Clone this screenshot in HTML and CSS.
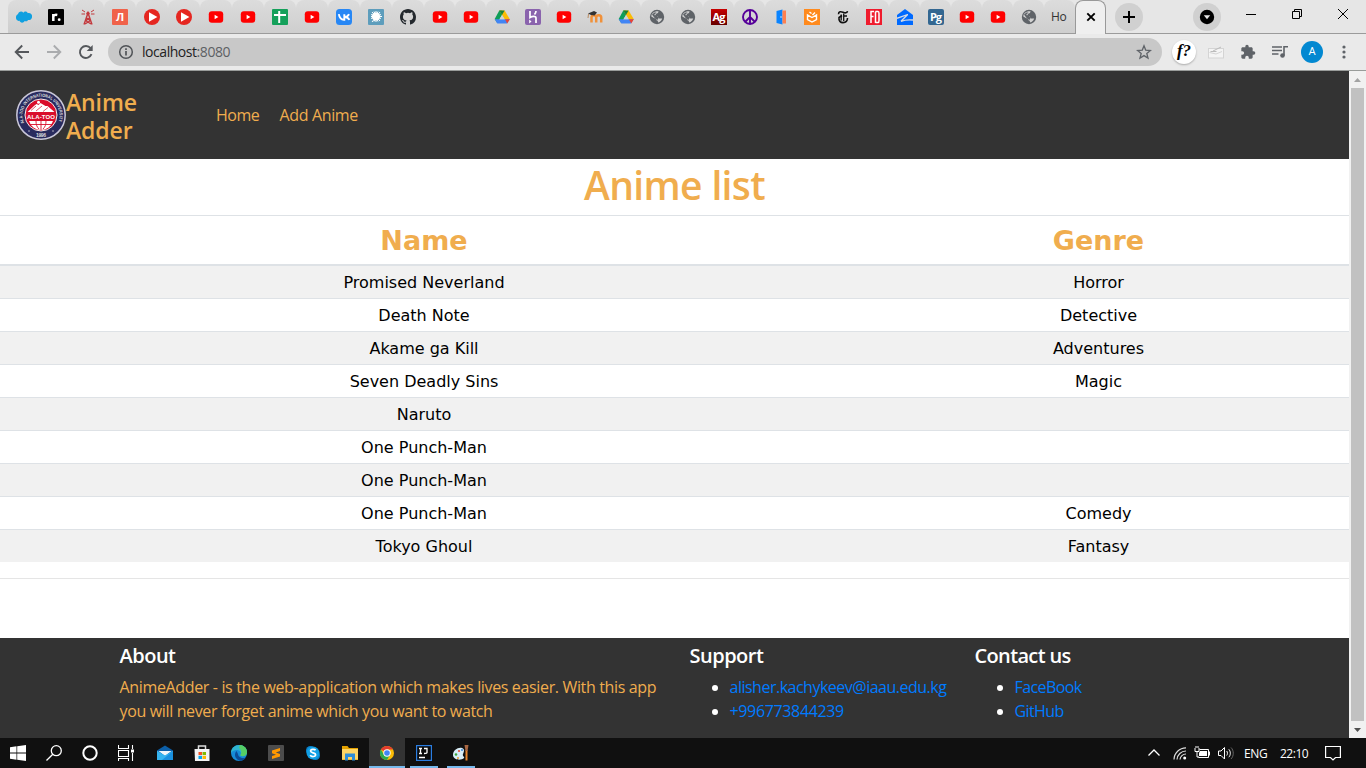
FILE: index.html
```html
<!DOCTYPE html>
<html lang="en">
<head>
<meta charset="utf-8">
<title>Home</title>
<link rel="stylesheet" href="styles.css">
</head>
<body>
<svg class="defs" aria-hidden="true">
  <symbol id="yt" viewBox="0 0 16 16"><rect x=".8" y="2.300" width="14.400" height="11.400" rx="3" fill="#f00"/><path d="M6.600 5.800v4.400L10.400 8z" fill="#fff"/></symbol>
  <symbol id="play" viewBox="0 0 16 16"><circle cx="8" cy="8" r="8" fill="#e52620"/><path d="M5 3.200v9.600L13.400 8z" fill="#fff"/></symbol>
  <symbol id="globe" viewBox="0 0 16 16"><circle cx="8" cy="8" r="7.200" fill="#5f6368"/><path d="M9.500 2.300C9.500 4 8.500 4.500 7 4.700 7 6 6 6.300 5.500 6.500c1.500.7 3 .3 3.500 1.500.3 1 .5 1.500 1.500 1.500h2.700c-.7 2-2 3.500-4 4-.3-1-.2-2-1.700-2.300C7.500 9.500 4.500 9 2.300 7.500 2.500 5 4 2.200 9.500 2.300z" fill="#d2d2d2"/><path d="M3 5.500 5.500 3.500h2L5 6l3 .8 1.500 2L8.500 11 6 9.500z" fill="#5f6368"/></symbol>
  <symbol id="drive" viewBox="0 0 16 16"><path d="M5.300 1.500h2.500L8 6 3.200 14 .7 10z" fill="#0f9d58"/><path d="M5.400 1.500h5.200L16 10.500h-5.200z" fill="#fbbc04"/><path d="M5.400 1.500h5.200L8 6z" fill="#188038"/><path d="M.7 10.300h15L13 14.600H3.300z" fill="#4285f4"/><path d="M11 10.300h4.800L13.200 14.600z" fill="#ea4335"/><path d="M8 6l2.500 4.300H5.500z" fill="#d2d2d2"/></symbol>
</svg>

<header class="tabstrip">
  <div class="tabs">
    <div class="tab"><svg viewBox="0 0 16 16"><path d="M1.300 11.300C-.8 10 -.3 5.500 2 5.200 2.500 2.300 6 1.800 7.300 3.700 8.500 2 11 2.400 11.900 4.200c2.900-.8 5 2 3.900 4.700-.8 2-2.700 2.400-3.800 2-1 1.800-2.700 1.600-3.400 1.100-1 2.400-4.500 2-5.100-.2-1 .2-1.700 0-2.200-.5z" fill="#10a0e0"/></svg></div>
    <div class="tab"><svg viewBox="0 0 16 16"><rect width="16" height="16" rx="1" fill="#000"/><path d="M5.300 12V5M5.300 8c0-2 2-2.400 4-2" fill="none" stroke="#fff" stroke-width="2.500"/><circle cx="11.200" cy="10.700" r="1.400" fill="#fff"/></svg></div>
    <div class="tab"><svg viewBox="0 0 16 16" fill="none" stroke="#c3393d"><path d="M4 15.500 8 4l4 11.500M5.500 12 10 8.500M10.800 12 6 8.500M5 15l5.500-3.500M11 15l-5.500-3.500" stroke-width="1.400"/><circle cx="8" cy="4.500" r="1.300" fill="#c3393d"/><path d="M2 1l3 2M14 1l-3 2M1.500 5H5M14.500 5H11" stroke-width="1"/></svg></div>
    <div class="tab"><span class="fav fav-l">Л</span></div>
    <div class="tab"><svg><use href="#play"/></svg></div>
    <div class="tab"><svg><use href="#play"/></svg></div>
    <div class="tab"><svg><use href="#yt"/></svg></div>
    <div class="tab"><svg><use href="#yt"/></svg></div>
    <div class="tab"><svg viewBox="0 0 16 16"><rect width="16" height="16" rx="1" fill="#14a05a"/><path d="M2 6h12M7.200 2v12" stroke="#fff" stroke-width="2"/></svg></div>
    <div class="tab"><svg><use href="#yt"/></svg></div>
    <div class="tab"><svg viewBox="0 0 16 16"><rect width="16" height="16" rx="3.500" fill="#2787f5"/><path d="M2.800 5.200C3.500 9 5.200 11 8.300 10.800V5.200M13 5.200C12.200 7 10.800 8 8.800 8c2.200.1 3.700 1.200 4.600 2.900" fill="none" stroke="#fff" stroke-width="1.900"/></svg></div>
    <div class="tab"><svg viewBox="0 0 16 16"><rect width="16" height="16" rx="1" fill="#5d9dbc"/><circle cx="8" cy="7.500" r="4" fill="#fff"/><path d="M8 2v11M3 7.500h11M4 3l8 9M12 3l-8 10M6 2.500l4 10M10 2.500l-4 10M3 5.500l10 4M3 9.500l10-4" stroke="#fff" stroke-width="1"/></svg></div>
    <div class="tab"><svg viewBox="0 0 16 16"><path fill="#24292e" fill-rule="evenodd" d="M8 0C3.580 0 0 3.580 0 8c0 3.540 2.290 6.530 5.470 7.590.4.070.55-.17.55-.38 0-.19-.01-.82-.01-1.490-2.010.37-2.530-.49-2.690-.94-.09-.23-.48-.94-.82-1.130-.28-.15-.68-.52-.01-.53.63-.01 1.080.58 1.230.82.72 1.210 1.870.87 2.330.66.070-.52.28-.87.51-1.070-1.780-.2-3.640-.89-3.640-3.950 0-.87.31-1.590.82-2.150-.08-.2-.36-1.020.08-2.120 0 0 .67-.21 2.200.82a7.600 7.600 0 0 1 4 0c1.530-1.040 2.200-.82 2.200-.82.44 1.100.16 1.920.08 2.120.51.56.82 1.270.82 2.150 0 3.070-1.870 3.750-3.650 3.950.29.25.54.73.54 1.480 0 1.070-.01 1.930-.01 2.200 0 .21.15.46.55.38A8.010 8.010 0 0 0 16 8c0-4.420-3.580-8-8-8z"/></svg></div>
    <div class="tab slim"><svg><use href="#yt"/></svg></div>
    <div class="tab slim"><svg><use href="#yt"/></svg></div>
    <div class="tab slim"><svg><use href="#drive"/></svg></div>
    <div class="tab slim"><svg viewBox="0 0 16 16"><rect width="16" height="16" rx="2" fill="#8a63ad"/><path d="M5 2v6.500C7 7.300 11 6.500 11 9v5M11 2c0 1.500-.5 2.300-1.500 3.500" fill="none" stroke="#fff" stroke-width="1.700"/><path d="M4.200 10.500v4l2.300-2z" fill="#fff"/></svg></div>
    <div class="tab slim"><svg><use href="#yt"/></svg></div>
    <div class="tab slim"><svg viewBox="0 0 16 16"><path d="M4.500 13.500V8.500c0-3 4.700-3 4.700 0v5-5c0-3 5-3 5 0v5" fill="none" stroke="#f0913a" stroke-width="2.500"/><path d="M1 4.500l6-2.500L10 3.500 7.500 6.500 4 6z" fill="#333"/><path d="M1.500 5l-.5 4" stroke="#b98b60"/></svg></div>
    <div class="tab slim"><svg><use href="#drive"/></svg></div>
    <div class="tab slim"><svg><use href="#globe"/></svg></div>
    <div class="tab slim"><svg><use href="#globe"/></svg></div>
    <div class="tab slim"><span class="fav fav-ag">Ag</span></div>
    <div class="tab slim"><svg viewBox="0 0 16 16" fill="none" stroke="#560099" stroke-width="1.900"><circle cx="8" cy="8" r="7"/><path d="M8 1v14M8 8l-5 5M8 8l5 5"/></svg></div>
    <div class="tab slim"><svg viewBox="0 0 16 16"><path d="M3.500 2 9.500.5v15l-6-1.500z" fill="#0a84ff"/><path d="M9.500 1.500H13v13H9.500z" fill="#ff8050"/><circle cx="8" cy="8" r=".7" fill="#fff"/></svg></div>
    <div class="tab slim"><svg viewBox="0 0 16 16"><rect width="16" height="16" fill="#ff8a1d"/><path d="M3.500 6v4.500L8 13l4.500-2.500V6L8 8.500zM5.500 3l2 1.500M8.500 6l2.500-2.500" fill="none" stroke="#fff" stroke-width="1.400"/></svg></div>
    <div class="tab slim"><svg viewBox="0 0 16 16" fill="none" stroke="#111"><path d="M3.500 5.200c0-3 2.500-2.700 4.500-2s4 1.300 4.500-1M12.500 9C12.500 12 10.500 13.600 8 13.600S3.500 12 4 8.500L7 6.500M9 7h3" stroke-width="1.600"/><path d="M6.200 5.500v6M8.700 4.500v7.500" stroke-width="1.300"/></svg></div>
    <div class="tab slim"><svg viewBox="0 0 16 16"><rect width="16" height="16" fill="#ef1b2d"/><path d="M5 14V2.500h3M5 7.500h2.500M9.500 2.500V14M9.500 2.500H12c1 0 1 1 1 2v7c0 1 0 2-1 2H9.500" fill="none" stroke="#fff" stroke-width="1.500"/></svg></div>
    <div class="tab slim"><svg viewBox="0 0 16 16"><path d="M8 0 0 6v10h16V6z" fill="#006aff"/><path d="M0 9.300 10.700 5.500 4 12.300c4-1.500 7-1.800 12-1.300" fill="none" stroke="#d5dbe5" stroke-width="1.300"/></svg></div>
    <div class="tab slim"><span class="fav fav-pg">Pg</span></div>
    <div class="tab slim"><svg><use href="#yt"/></svg></div>
    <div class="tab slim"><svg><use href="#yt"/></svg></div>
    <div class="tab slim"><svg><use href="#globe"/></svg></div>
    <div class="tab slim plain"><span class="tab-title">Ho</span></div>
    <div class="tab slim active"><svg viewBox="0 0 16 16"><path d="M4.300 4.300l7.400 7.400M11.700 4.300l-7.400 7.400" stroke="#000" stroke-width="1.900"/></svg></div>
  </div>
  <div class="round-btn newtab"><svg viewBox="0 0 16 16"><path d="M8 2v12M2 8h12" stroke="#000" stroke-width="2"/></svg></div>
  <div class="round-btn search"><svg viewBox="0 0 16 16"><circle cx="8" cy="8" r="7.200" fill="#000"/><path d="M4.800 6.300h6.400L8 10.200z" fill="#e6e6e6"/></svg></div>
  <div class="window-btns">
    <svg viewBox="0 0 12 12"><path d="M1 6.500h10" stroke="#000"/></svg>
    <svg viewBox="0 0 12 12" fill="none" stroke="#000"><path d="M1.500 3.500h7v7h-7zM3.500 3.500v-2h7v7h-2"/></svg>
    <svg viewBox="0 0 12 12"><path d="M1 1l10 10M11 1 1 11" stroke="#000" stroke-width="1"/></svg>
  </div>
</header>

<div class="toolbar">
  <svg class="nav-ico" viewBox="0 0 16 16" fill="none" stroke="#55585c" stroke-width="1.900"><path d="M15 8H2M8.200 1.500 1.700 8l6.500 6.500"/></svg>
  <svg class="nav-ico" viewBox="0 0 16 16" fill="none" stroke="#aaacae" stroke-width="1.900"><path d="M1 8h13M7.800 1.500 14.300 8l-6.500 6.500"/></svg>
  <svg class="nav-ico" viewBox="0 0 16 16" fill="none" stroke="#55585c" stroke-width="1.900"><path d="M13.500 10.200A6 6 0 1 1 12.600 4.200"/><path d="M14.700 1v6H8.700z" fill="#55585c" stroke="none"/></svg>
  <div class="omnibox">
    <svg viewBox="0 0 16 16" fill="none" stroke="#505357" stroke-width="1.500"><circle cx="8" cy="8" r="6.300"/><path d="M8 7v4.500M8 4.300v1.600" stroke-width="1.700"/></svg>
    <span class="url">localhost<i>:8080</i></span>
    <svg class="star" viewBox="0 0 16 16" fill="none" stroke="#5f6368" stroke-width="1.300"><path d="M8 1.800l1.700 4.300 4.700.4-3.600 3 1.200 4.500-4-2.400L4 14l1.200-4.500-3.600-3 4.700-.4z"/></svg>
  </div>
  <div class="extensions">
    <span class="fx">f?</span>
    <svg viewBox="0 0 16 16"><rect x=".5" y="4.500" width="15" height="9.500" fill="#f4f4f4" stroke="#d4d4d4"/><path d="M1.500 8.500 8 10l6-2.500" fill="none" stroke="#d4d4d4"/><path d="M5 7l8-4M2.500 7.500h6" fill="none" stroke="#bbb"/></svg>
    <svg viewBox="0 0 24 24"><path fill="#5f6368" d="M20.500 11H19V7c0-1.100-.9-2-2-2h-4V3.500a2.500 2.500 0 0 0-5 0V5H4c-1.100 0-2 .9-2 2v3.800h1.500a2.700 2.700 0 0 1 0 5.400H2V20c0 1.100.9 2 2 2h3.800v-1.500a2.700 2.700 0 0 1 5.400 0V22H17c1.100 0 2-.9 2-2v-4h1.500a2.500 2.500 0 0 0 0-5z"/></svg>
    <svg viewBox="0 0 16 16"><path d="M0 3h10M0 6.500h10M0 10h6.500" stroke="#5f6368" stroke-width="1.500"/><circle cx="10.500" cy="11.500" r="2.300" fill="#5f6368"/><path d="M12 11.500V2.800h4" fill="none" stroke="#5f6368" stroke-width="1.600"/></svg>
    <span class="avatar">A</span>
    <svg viewBox="0 0 16 16" fill="#5f6368"><circle cx="8" cy="3" r="1.600"/><circle cx="8" cy="8" r="1.600"/><circle cx="8" cy="13" r="1.600"/></svg>
  </div>
</div>

<div class="viewport">
  <div class="page">
    <nav class="navbar">
      <svg class="logo" viewBox="0 0 50 50">
        <circle cx="25" cy="25" r="24.200" fill="#292b5e" stroke="#c9c7d8" stroke-width="1.500"/>
        <path id="ring" d="M8.200 33A18.500 18.500 0 1 1 41.800 33" fill="none"/>
        <text class="ring-text"><textPath href="#ring" textLength="72" lengthAdjust="spacingAndGlyphs">ALA-TOO INTERNATIONAL UNIVERSITY</textPath></text>
        <circle cx="25" cy="25" r="16" fill="#d90d2b" stroke="#eee" stroke-width="1"/>
        <path d="M11.500 22 18.500 15.500l2-1.500 2 1 2-2 5 3 2 0L38.500 22z" fill="#fff"/><circle cx="22.500" cy="12.300" r="1.500" fill="#fff"/>
        <path d="M15 20.500l5-4.500M20 21l6-5M27 21.500l5-4" stroke="#d90d2b" stroke-width=".7"/>
        <path d="M13 31h24a12.500 12.500 0 0 1-24 0z" fill="#fff"/><path d="M25 31v9M20 31c0 4 1 6 3 8M30 31c0 4-1 6-3 8M14 34.500h22" stroke="#d90d2b" stroke-width=".9" fill="none"/>
        <text class="logo-name" x="25" y="28.700" textLength="28">ALA-TOO</text>
        <text class="logo-year" x="25" y="47" textLength="10">1996</text>
        <circle cx="13" cy="41" r=".7" fill="#ddd"/><circle cx="37" cy="41" r=".7" fill="#ddd"/>
      </svg>
      <h4 class="brand">Anime<br>Adder</h4>
      <a class="nav-home">Home</a>
      <a class="nav-add">Add Anime</a>
    </nav>
    <h1>Anime list</h1>
    <div class="table">
      <div class="row head"><div>Name</div><div>Genre</div></div>
      <div class="row"><div>Promised Neverland</div><div>Horror</div></div>
      <div class="row"><div>Death Note</div><div>Detective</div></div>
      <div class="row"><div>Akame ga Kill</div><div>Adventures</div></div>
      <div class="row"><div>Seven Deadly Sins</div><div>Magic</div></div>
      <div class="row"><div>Naruto</div><div></div></div>
      <div class="row"><div>One Punch-Man</div><div></div></div>
      <div class="row"><div>One Punch-Man</div><div></div></div>
      <div class="row"><div>One Punch-Man</div><div>Comedy</div></div>
      <div class="row"><div>Tokyo Ghoul</div><div>Fantasy</div></div>
    </div>
    <hr>
    <footer>
      <section><h5>About</h5><p>AnimeAdder - is the web-application which makes lives easier. With this app<br>you will never forget anime which you want to watch</p></section>
      <section><h5>Support</h5><ul><li class="mail"><a>alisher.kachykeev@iaau.edu.kg</a></li><li><a>+996773844239</a></li></ul></section>
      <section><h5 class="contact-title">Contact us</h5><ul><li class="social"><a>FaceBook</a></li><li class="social"><a>GitHub</a></li></ul></section>
    </footer>
  </div>
  <div class="scrollbar">
    <svg viewBox="0 0 17 17"><path d="M5 11h7L8.500 7z" fill="#a3a3a3"/></svg>
    <div class="thumb"></div>
    <svg viewBox="0 0 17 17"><path d="M5 7h7l-3.500 4z" fill="#505050"/></svg>
  </div>
</div>

<div class="taskbar">
  <div class="task sys"><svg viewBox="0 0 16 16"><path d="M0 2.300 6.500 1.300v6.300H0zM7.200 1.200 16 0v7.600H7.200zM0 8.400h6.500v6.300L0 13.700zM7.200 8.400H16V16l-8.800-1.200z" fill="#fff"/></svg></div>
  <div class="task sys"><svg viewBox="0 0 16 16" fill="none" stroke="#fff" stroke-width="1.300"><circle cx="10.300" cy="5.700" r="5"/><path d="M6.800 9.200.5 15.500"/></svg></div>
  <div class="task sys"><svg viewBox="0 0 16 16"><circle cx="8" cy="8" r="6.700" fill="none" stroke="#fff" stroke-width="2"/></svg></div>
  <div class="task sys"><svg viewBox="0 0 16 16" fill="none" stroke="#fff" stroke-width="1.100"><path d="M.5 0v3.500h10V0M.5 5.500h10v6H.500zM.5 16v-2.500h10V16M14.500 0v4M14.500 8v8"/><rect x="13" y="4.500" width="3" height="3" fill="#fff" stroke="none"/></svg></div>
  <div class="task first-app"><svg viewBox="0 0 16 16"><path d="M0 5.500 8 .5l8 5V15H0z" fill="#0c5fa8"/><path d="M1.500 6h13L8 11z" fill="#f2f6fa"/><path d="M0 5.800 8 10.500l8-4.700V15H0z" fill="#35b4f0"/><path d="M16 6v9H5z" fill="#1a90df"/></svg></div>
  <div class="task"><svg viewBox="0 0 16 16"><path d="M4.500 4V1h7v3" fill="none" stroke="#ddd" stroke-width="1.500"/><path d="M.5 4h15v12H1z" fill="#f3f3f3"/><path d="M4.500 7H8v3H4.500z" fill="#f25022"/><path d="M8.500 7H12v3H8.500z" fill="#7fba00"/><path d="M4.500 10.800H8V14H4.500z" fill="#00a4ef"/><path d="M8.500 10.800H12V14H8.500z" fill="#ffb900"/></svg></div>
  <div class="task"><svg viewBox="0 0 16 16"><circle cx="8" cy="8" r="8" fill="#168bd8"/><path d="M0 8C0 3 4 0 8 0c5 0 8 3.500 8 7 0 3-2 4.300-4.500 4.300-1.600 0-2.500-.8-2-1.500C11 7 8 4.500 5 5 2.500 5.300.8 6.500 0 8z" fill="#2fb5d0"/><path d="M9 .1c5 .5 7 4 7 7 0 3-2 4.200-4.500 4.200-1.600 0-2.500-.8-2-1.500 1.500-2 1-5-1.500-7z" fill="#55cf65"/><path d="M5.500 6C2 10 5 15.500 10 15.700c2.500-.2 4-1.700 5-3.200-4 1.500-8-.5-8-3.500z" fill="#0b4c98"/></svg></div>
  <div class="task"><svg viewBox="0 0 16 16"><rect width="16" height="16" rx="1" fill="#4c4c4c"/><path d="M4 5.500 12 3v3L7.800 7.500 12 9v2.500L4 14v-3l4-1.300L4 8.300z" fill="#ff9800"/></svg></div>
  <div class="task"><svg viewBox="0 0 16 16"><circle cx="5.500" cy="5.500" r="4.500" fill="#0a83cd"/><circle cx="10.500" cy="10.500" r="4.500" fill="#0a83cd"/><circle cx="8" cy="8" r="6.500" fill="#119fe5"/><path d="M10.600 5.300C9.700 4 5.600 3.900 5.600 6c0 2.400 5 1.200 5 3.800 0 2.200-4.300 2.300-5.400.3" fill="none" stroke="#fff" stroke-width="1.700"/></svg></div>
  <div class="task"><svg viewBox="0 0 16 16"><path d="M0 1h5.500L7 3h9v12H0z" fill="#e5a200"/><path d="M0 4h16v10.500H0z" fill="#ffd665"/><path d="M3 15.500V8.500h10v7h-3V12H6v3.500z" fill="#2f8ed8"/></svg></div>
  <div class="task current"><svg viewBox="0 0 16 16"><circle cx="8" cy="8" r="7" fill="#fbbc05"/><path d="M8 8 1.900 4.500A7 7 0 0 1 14 4.500H8z" fill="#e33b2e"/><path d="M1.900 4.500A7 7 0 0 0 8 15l3-5.300H5z" fill="#2da94f"/><circle cx="8" cy="8" r="3.700" fill="#fff"/><circle cx="8" cy="8" r="2.800" fill="#4285f4"/></svg></div>
  <div class="task open"><svg viewBox="0 0 16 16"><rect x=".6" y=".6" width="14.800" height="14.800" fill="#0b0b0b" stroke="#2a7de1" stroke-width="1.200"/><path d="M3 3.500h3M4.500 3.500v5M3 8.500h3M8 3.500h3v4c0 1-1 1-3 1M3 12.500h6" fill="none" stroke="#fff" stroke-width="1.300"/></svg></div>
  <div class="task open"><svg viewBox="0 0 16 16"><path d="M0 10C0 5 5 2 9 3c3 1 2 4 1 6s2 3 1 4c-3 3-11 2-11-3z" fill="#d9edf7"/><circle cx="3" cy="9.500" r="1.300" fill="#3ca63c"/><circle cx="6" cy="6" r="1.100" fill="#e64b35"/><circle cx="9" cy="5" r=".9" fill="#2b79d0"/><circle cx="5" cy="13" r="1" fill="#e89b2c"/><path d="M13.500 15.500V5" stroke="#e8842c" stroke-width="2"/><path d="M11.500 0h4l-1 6h-2z" fill="#a86743"/></svg></div>
  <div class="tray">
    <svg class="t-up" viewBox="0 0 12 12"><path d="M.5 8.500 6 3l5.500 5.500" fill="none" stroke="#fff" stroke-width="1.300"/></svg>
    <svg class="t-wifi" viewBox="0 0 14 14" fill="none" stroke="#ddd" stroke-width="1.200"><path d="M1 13.500A12 12 0 0 1 13 1.800M4 13.500A9 9 0 0 1 13 5M7 13.500A6 6 0 0 1 13 8"/><circle cx="11.700" cy="12" r="1.500" fill="#fff" stroke="none"/></svg>
    <svg class="t-bat" viewBox="0 0 16 14"><path d="M1 2v3.500h4V2M2 0v2M4 0v2M3 5.500V11h2" fill="none" stroke="#fff"/><path d="M5.500 3.500h9v8h-10M15.500 5.500v4" fill="none" stroke="#fff"/><path d="M6 5h7v5H5V7z" fill="#fff"/></svg>
    <svg class="t-vol" viewBox="0 0 16 14" fill="none" stroke="#fff"><path d="M.5 5v4.500H3L6.500 13V1.500L3 5z"/><path d="M8.700 5c1 1.200 1 3.300 0 4.500M10.800 3.300c2 2 2 5.900 0 7.900"/><path d="M13 1.500c3 3 3 8.500 0 11.500" stroke="#666"/></svg>
    <span class="lang">ENG</span>
    <span class="clock">22:10</span>
    <svg class="t-note" viewBox="0 0 16 16"><path d="M.6 1.500h14.800v11H10.500L8 15l-2.500-2.500H.6z" fill="none" stroke="#fff" stroke-width="1.200"/></svg>
  </div>
</div>
</body>
</html>
```

FILE: styles.css
```css
* { box-sizing: border-box; }
body { margin: 0; width: 1366px; height: 768px; overflow: hidden; display: flex; flex-direction: column; font-family: "Open Sans", "Noto Sans", sans-serif; background: #fff; }
svg { display: block; flex: none; }
.defs { position: absolute; width: 0; height: 0; }

.tabstrip { height: 34px; flex: none; display: flex; background: #e6e6e6; border-bottom: 1px solid #9b9b9b; padding-left: 8px; }
.tabs { display: flex; height: 34px; }
.tab { width: 32px; height: 33px; display: flex; align-items: center; justify-content: center; background: linear-gradient(#dcdcdc, #cecece); border-radius: 8px 8px 0 0; position: relative; }
.tab::after { content: ""; position: absolute; right: -1px; top: 8px; width: 1px; height: 19px; background: #868686; }
.tab svg, .fav { width: 16px; height: 16px; }
.tab.slim { width: 31px; }
.tab.plain { justify-content: flex-start; padding-left: 7px; }
.tab.plain::after { display: none; }
.tab-title { font-size: 12px; letter-spacing: -.4px; color: #333; }
.tab.active { height: 34px; background: #efefef; border: 1px solid #999; border-bottom: 0; padding-bottom: 2px; }
.tab.active::after { display: none; }
.fav { font-weight: 700; color: #fff; text-align: center; line-height: 15px; font-size: 11px; }
.fav-l { background: #f0624a; border-radius: 1px; }
.fav-ag { background: linear-gradient(#c80000, #650000); letter-spacing: -1px; }
.fav-pg { background: #336791; border-radius: 2px; letter-spacing: -1px; }
.round-btn { width: 28px; height: 28px; border-radius: 50%; background: #d0d0d0; display: flex; align-items: center; justify-content: center; margin-top: 3px; }
.round-btn svg { width: 16px; height: 16px; }
.newtab { margin-left: 9px; }
.search { margin-left: 50px; }
.window-btns { display: flex; gap: 34px; margin: 8px 0 0 24px; }
.window-btns svg { width: 12px; height: 12px; }

.toolbar { height: 37px; flex: none; display: flex; align-items: center; background: #eaeaea; border-bottom: 1px solid #999c9a; padding-left: 14px; gap: 16px; }
.nav-ico { width: 16px; height: 16px; }
.omnibox { width: 1054px; height: 28px; margin-left: -2px; border-radius: 14px; background: #c8c8c8; display: flex; align-items: center; padding: 0 10px; font-size: 14px; color: #222; }
.omnibox svg { width: 16px; height: 16px; }
.url { margin-left: 8px; letter-spacing: -.45px; margin-top: -1px; }
.url i { font-style: normal; color: #5d6064; }
.star { margin-left: auto; }
.extensions { display: flex; align-items: center; gap: 16px; margin-left: -6px; }
.extensions svg { width: 16px; height: 16px; }
.fx { width: 24px; height: 24px; border-radius: 50%; background: #fff; box-shadow: 0 1px 2px #aaa; text-align: center; font: italic 700 17px/22px "Liberation Serif", serif; margin-right: -4px; }
.avatar { width: 22px; height: 22px; border-radius: 50%; background: #0288d1; color: #fff; font: 11px/22px Roboto, sans-serif; text-align: center; margin-right: -3px; margin-left: -3px; }

.viewport { height: 667px; flex: none; display: flex; }
.page { width: 1349px; display: flex; flex-direction: column; }
.navbar { height: 88px; background: #333; padding-left: 16px; display: flex; align-items: center; color: #f0ad4e; }
.logo { width: 50px; height: 50px; }
.ring-text { font: 700 4.500px "Liberation Sans", sans-serif; fill: #ddd; }
.logo-name { font: 700 6px "Liberation Sans", sans-serif; fill: #fff; text-anchor: middle; }
.logo-year { font: 700 5px "Liberation Sans", sans-serif; fill: #ddd; text-anchor: middle; }
.brand { margin: 2px 0 0; width: 150px; font-size: 23px; line-height: 28px; font-weight: 600; letter-spacing: -.1px; }
.nav-home { width: 63.500px; font-size: 16px; letter-spacing: -.5px; }
.nav-add { font-size: 16px; letter-spacing: -.35px; }
h1 { height: 56px; margin: 0; text-align: center; color: #f0ad4e; font-size: 39px; line-height: 52px; font-weight: 600; letter-spacing: -.65px; }
.table { font-family: "DejaVu Sans", sans-serif; font-size: 16px; color: #000; }
.row { display: grid; grid-template-columns: 848px 501px; height: 33px; line-height: 33px; text-align: center; border-top: 1px solid #dee2e6; }
.row:nth-child(even) { background: #f1f1f1; }
.row.head { height: 51px; line-height: 49px; border-bottom: 2px solid #dee2e6; color: #f0ad4e; font-size: 27px; font-weight: 700; }
.row.head + .row { height: 32px; border-top: 0; }
hr { width: 100%; margin: 16px 0 59px; border: 0; border-top: 1px solid #e5e5e5; }
footer { height: 100px; flex: none; background: #333; display: grid; grid-template-columns: 570px 285px 1fr; padding-left: 119.500px; color: #f0ad4e; font-size: 16px; line-height: 24px; }
h5 { margin: 6px 0 7px; font-size: 20px; line-height: 24px; font-weight: 600; color: #fff; letter-spacing: -.5px; }
.contact-title { letter-spacing: -.65px; }
p { margin: 0; white-space: nowrap; letter-spacing: -.35px; }
ul { margin: 0; padding-left: 40px; color: #fff; }
li { letter-spacing: -.35px; }
.mail { letter-spacing: -.5px; }
.social { letter-spacing: -.6px; }
li a { color: #007bff; }

.scrollbar { width: 17px; background: #f1f1f1; display: flex; flex-direction: column; }
.scrollbar svg { width: 17px; height: 17px; }
.thumb { flex: 1; margin: 0 2px; background: #c1c1c1; }

.taskbar { height: 30px; flex: none; display: flex; background: #101010; color: #fff; }
.task { width: 37px; height: 30px; display: flex; align-items: center; justify-content: center; }
.task svg { width: 16px; height: 16px; }
.task.sys { width: 36px; }
.task.first-app { margin-left: 2.500px; }
.task.current { margin-left: .5px; width: 36px; background: #333; border-bottom: 2px solid #76b9ed; }
.task.open { width: 28px; margin-left: 5px; border-bottom: 2px solid #76b9ed; }
.task.open + .task.open { margin-left: 9px; }
.task.current svg, .task.open svg { margin-top: 2px; }
.tray { margin-left: auto; display: flex; align-items: center; padding-right: 25px; font-size: 12px; }
.t-up { width: 12px; height: 12px; margin-right: 13px; }
.t-wifi { width: 14px; height: 14px; margin-right: 7px; }
.t-bat { width: 16px; height: 14px; margin-right: 8px; }
.t-vol { width: 16px; height: 14px; margin-right: 10px; }
.lang { width: 36px; letter-spacing: -.4px; }
.clock { width: 45px; letter-spacing: -.5px; }
.t-note { width: 16px; height: 16px; }
```
